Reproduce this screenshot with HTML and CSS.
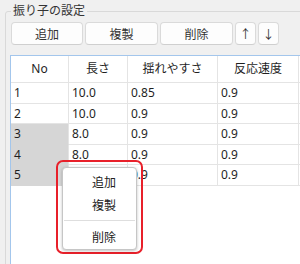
FILE: index.html
```html
<!DOCTYPE html>
<html lang="ja">
<head>
<meta charset="utf-8">
<title>振り子の設定</title>
<link rel="stylesheet" href="styles.css">
</head>
<body>

<div class="panel">
  <fieldset class="group">
    <legend>振り子の設定</legend>

    <div class="toolbar">
      <button class="btn">追加</button>
      <button class="btn">複製</button>
      <button class="btn">削除</button>
      <button class="btn btn-small">↑</button>
      <button class="btn btn-small">↓</button>
    </div>

    <div class="grid">
      <table class="pendulums">
        <thead>
          <tr>
            <th class="c-no">No</th>
            <th class="c-len">長さ</th>
            <th class="c-ease">揺れやすさ</th>
            <th class="c-speed">反応速度</th>
            <th class="c-rest"></th>
          </tr>
        </thead>
        <tbody>
          <tr><td>1</td><td>10.0</td><td>0.85</td><td>0.9</td><td></td></tr>
          <tr><td>2</td><td>10.0</td><td>0.9</td><td>0.9</td><td></td></tr>
          <tr><td class="sel">3</td><td>8.0</td><td>0.9</td><td>0.9</td><td></td></tr>
          <tr><td class="sel">4</td><td>8.0</td><td>0.9</td><td>0.9</td><td></td></tr>
          <tr><td class="sel">5</td><td>8.0</td><td>0.9</td><td>0.9</td><td></td></tr>
        </tbody>
      </table>
    </div>
  </fieldset>

  <!-- 右クリックメニュー（赤枠で強調） -->
  <div class="menu-mark">
    <div class="menu">
      <div class="menu-item">追加</div>
      <div class="menu-item">複製</div>
      <div class="menu-sep"></div>
      <div class="menu-item">削除</div>
    </div>
  </div>
</div>

</body>
</html>
```

FILE: styles.css
```css
html, body {
  margin: 0;
  padding: 0;
  background-color: #f0f0f0;
}
body {
  width: 300px;
  height: 264px;
  overflow: hidden;
  font-family: "Noto Sans", "Noto Sans CJK JP", sans-serif;
  font-size: 12px;
  color: #1f1f1f;
}
.panel {
  position: relative;
  display: flow-root;
  width: 300px;
  height: 264px;
  overflow: hidden;
}
.group {
  margin: 4px 0 0 5px;
  padding: 4px 0 0 5px;
  width: 420px;
  min-width: 0;
  border: 1px solid #d9d9d9;
  border-radius: 3px;
}
.group legend {
  padding: 0 2px;
  font-size: 12px;
  line-height: 14px;
  color: #333;
}
.toolbar {
  display: flex;
  gap: 2px;
}
.btn {
  width: 73px;
  height: 23px;
  padding: 0;
  background-color: #fdfdfd;
  border: 1px solid #dadada;
  border-bottom-color: #cfcfcf;
  border-radius: 4px;
  font-family: "Noto Sans", "Noto Sans CJK JP", sans-serif;
  font-size: 12px;
  color: #333;
}
.btn:first-child {
  width: 72px;
}
.btn-small {
  width: 21px;
}
.grid {
  margin: 10px 0 0 -1px;
  height: 220px;
  background-color: #ffffff;
  border-top: 1px solid #a3c6ec;
  border-left: 1px solid #a3c6ec;
}
.pendulums {
  border-collapse: separate;
  border-spacing: 0;
  table-layout: fixed;
  width: 400px;
}
.pendulums th,
.pendulums td {
  box-sizing: border-box;
  padding: 0 0 0 3px;
  border-right: 1px solid #e4e4e4;
  border-bottom: 1px solid #e4e4e4;
  white-space: nowrap;
  overflow: hidden;
}
.pendulums th {
  font-weight: normal;
  text-align: center;
  line-height: 26px;
  padding: 0;
}
.pendulums td {
  line-height: 19.5px;
}
.c-no { width: 58px; }
.c-len { width: 59px; }
.c-ease { width: 90px; }
.c-speed { width: 81px; }
.pendulums td.sel {
  background-color: #d6d6d6;
  border-bottom-color: #d6d6d6;
}
.menu-mark {
  position: absolute;
  left: 56px;
  top: 160px;
  width: 87px;
  height: 94px;
  box-sizing: border-box;
  padding: 5px 4px 2px 4px;
  border: 2px solid #e8202a;
  border-radius: 7px;
}
.menu {
  box-sizing: border-box;
  height: 100%;
  padding: 3px 0 0;
  background-color: #ffffff;
  border: 1px solid #c6c6c6;
  border-radius: 4px;
  box-shadow: 0 1px 3px rgba(0, 0, 0, 0.25);
}
.menu-item {
  padding-left: 29px;
  line-height: 23px;
  color: #222;
}
.menu-sep {
  margin: 3px 1px 5px;
  border-top: 1px solid #dedede;
}
```
